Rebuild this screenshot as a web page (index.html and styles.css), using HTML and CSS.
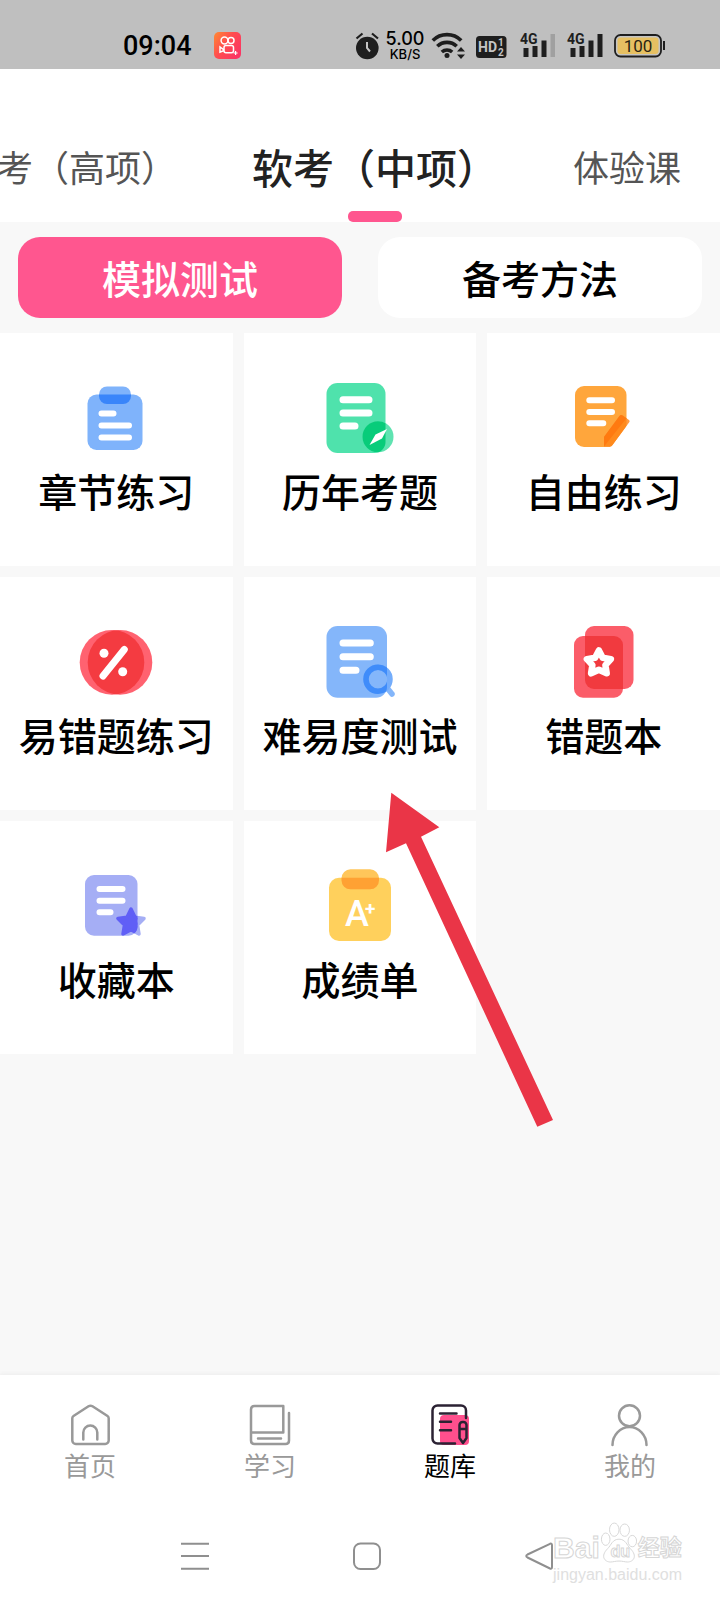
FILE: index.html
```html
<!DOCTYPE html>
<html lang="zh-CN">
<head>
<meta charset="utf-8">
<meta name="viewport" content="width=device-width, initial-scale=1">
<title>题库</title>
<link rel="stylesheet" href="styles.css">
</head>
<body>
<header class="status">
  <time class="clock">09:04</time>
  <svg class="app-badge" width="28" height="28" viewBox="0 0 28 28" aria-hidden="true">
    <defs><linearGradient id="badge" x1="0" y1="0" x2="1" y2="0.7"><stop offset="0" stop-color="#ff8a32"/><stop offset=".5" stop-color="#ff4c50"/><stop offset="1" stop-color="#fb3663"/></linearGradient></defs>
    <rect width="27" height="27" rx="5" fill="url(#badge)"/>
    <g fill="none" stroke="#fff" stroke-width="1.5"><circle cx="10.500" cy="8.500" r="3.400"/><circle cx="17" cy="8.500" r="3"/><rect x="10" y="13.500" width="9.500" height="7.300" rx="2"/><path d="M10 17.800 6 15v5.200l4-1.700"/></g>
    <path d="M21.600 19v4M19.600 21h4" stroke="#fff" stroke-width="1.2"/>
  </svg>
  <div class="indicators">
    <svg width="28" height="40" viewBox="0 0 28 40" aria-hidden="true">
      <circle cx="13.3" cy="22" r="11.3" fill="#1e1e1e"/><path d="m2.5 12.500 6-5M24 12.500l-6-5" stroke="#1e1e1e" stroke-width="2.200"/><path d="M13 16v6l3 3.500" fill="none" stroke="#c4c4c4" stroke-width="2"/>
    </svg>
    <span class="speed"><span>5.00</span><small>KB/S</small></span>
    <svg width="42" height="40" viewBox="0 0 42 40" aria-hidden="true">
      <g fill="none" stroke="#1e1e1e" stroke-width="3.600"><path d="M4.800 14.500a20 20 0 0 1 28.400 0"/><path d="M9.300 20.300a14 14 0 0 1 19.400 0"/><path d="M13.800 26a8 8 0 0 1 10.400 0"/></g>
      <circle cx="19" cy="29.500" r="2.500" fill="#1e1e1e"/><path d="m29 25.500 4-4.500 4 4.500zM29 28.500l4 4.500 4-4.500z" fill="#1e1e1e"/>
    </svg>
    <svg class="hd" width="42" height="40" viewBox="0 0 42 40" aria-hidden="true">
      <rect x="6" y="10" width="30.500" height="22" rx="3.500" fill="#1e1e1e"/><text x="8" y="26" font-size="14">HD</text><text x="28" y="20" font-size="10">1</text><text x="28" y="30" font-size="10">2</text>
    </svg>
    <svg class="signal" width="47" height="40" viewBox="0 0 47 40" aria-hidden="true">
      <text x="8" y="18" font-size="14">4G</text><path d="M11.500 22h5v9h-5zM20.500 20h5v11h-5zM29.500 14.500h5V31h-5z"/><path d="M38.500 8h4.500v23h-4.500z" fill="#a0a0a0"/>
    </svg>
    <svg class="signal" width="47" height="40" viewBox="0 0 47 40" aria-hidden="true">
      <text x="8" y="18" font-size="14">4G</text><path d="M11.500 22h5v9h-5zM20.500 20h5v11h-5zM29.500 14.500h5V31h-5zM38.500 8h5v23h-5z"/>
    </svg>
    <svg class="battery" width="64" height="40" viewBox="0 0 64 40" aria-hidden="true">
      <rect x="9" y="9" width="46" height="21.500" rx="5.500" fill="#c4c4c4" stroke="#1e1e1e" stroke-width="1.800"/><rect x="11.500" y="11.500" width="41" height="16.500" rx="3" fill="#e6c062"/><path d="M58 15v9" stroke="#1e1e1e" stroke-width="2"/><text x="32" y="26" font-size="17" text-anchor="middle">100</text>
    </svg>
  </div>
</header>

<nav class="courses" aria-label="课程">
  <a class="course" href="#">软考（高项）</a>
  <a class="course current" href="#" aria-current="page">软考（中项）</a>
  <a class="course" href="#">体验课</a>
</nav>

<main class="content">
  <div class="modes">
    <button class="mode selected" type="button">模拟测试</button>
    <button class="mode" type="button">备考方法</button>
  </div>

  <div class="grid">
    <a class="card" href="#">
      <svg class="icon" viewBox="0 0 80 80" aria-hidden="true">
        <rect x="11.500" y="17.500" width="55" height="55.500" rx="9" fill="#7fb3fb"/><rect x="23" y="9.500" width="32" height="17.500" rx="8" fill="#7fb3fb"/><path d="M23 17.500h32v1.500a8 8 0 0 1-8 8h-16a8 8 0 0 1-8-8z" fill="#3985fa"/>
        <path d="M25.500 36.500h12M25.500 48.500h27.500M25.500 60.500h27.500" class="lines soft"/>
      </svg>
      <span>章节练习</span>
    </a>
    <a class="card" href="#">
      <svg class="icon" viewBox="0 0 80 80" aria-hidden="true">
        <clipPath id="c2"><rect x="6.500" y="6" width="59" height="70" rx="11"/></clipPath>
        <rect x="6.500" y="6" width="59" height="70" rx="11" fill="#4fe2ac"/><circle cx="58" cy="59.700" r="15.500" fill="#5fe3b1"/><circle cx="58" cy="59.700" r="15.500" fill="#08cc7a" clip-path="url(#c2)"/>
        <path d="M23 22.700h26M23 36h26M23 49h12" class="lines"/><path d="M67 52 55.500 57.500 49.500 68l12.500-6.500z" fill="#fff"/>
      </svg>
      <span>历年考题</span>
    </a>
    <a class="card" href="#">
      <svg class="icon" viewBox="0 0 80 80" aria-hidden="true">
        <clipPath id="c3"><rect x="11" y="9" width="51.500" height="61" rx="9"/></clipPath>
        <path d="M20 9H53.500a9 9 0 0 1 9 9v27L46 70H20a9 9 0 0 1-9-9V18a9 9 0 0 1 9-9z" fill="#ffa63c"/>
        <path d="M58.500 38.500 65 43a1.500 1.500 0 0 1 .4 2L48.500 68q-1 1.500-3 1.500H40V60L55.500 39q1.500-1.500 3-.5z" fill="#ff9d45"/>
        <path d="M58.500 38.500 65 43a1.500 1.500 0 0 1 .4 2L48.500 68q-1 1.500-3 1.500H40V60L55.500 39q1.500-1.500 3-.5z" fill="#ff8a1c" clip-path="url(#c3)"/>
        <path d="M55.500 39 40 60v9.500L62.500 41.300l-4-2.800q-1.500-1-3 .5z" fill="#ff7a10"/>
        <path d="M25.300 23.200h22.700M25.300 35h22.700M25.300 46.300h14" class="lines soft"/>
      </svg>
      <span>自由练习</span>
    </a>
    <a class="card" href="#">
      <svg class="icon" viewBox="0 0 80 80" aria-hidden="true">
        <clipPath id="c4"><circle cx="36" cy="41.400" r="32.300"/></clipPath>
        <circle cx="36" cy="41.400" r="32.300" fill="#ff6270"/><circle cx="44" cy="41.400" r="32.300" fill="#ff6270"/><circle cx="44" cy="41.400" r="32.300" fill="#f43b41" clip-path="url(#c4)"/>
        <circle cx="28" cy="32.300" r="4.500" fill="#fff"/><circle cx="46.700" cy="50.700" r="4.500" fill="#fff"/><path d="M48.300 28.500 27 55" class="lines"/>
      </svg>
      <span>易错题练习</span>
    </a>
    <a class="card" href="#">
      <svg class="icon" viewBox="0 0 80 80" aria-hidden="true">
        <clipPath id="c5"><rect x="6.500" y="5" width="60.500" height="71.700" rx="11"/></clipPath>
        <rect x="6.500" y="5" width="60.500" height="71.700" rx="11" fill="#84b6fa"/><path d="m68 68 4 5" stroke="#84b6fa" stroke-width="5.500" stroke-linecap="round"/>
        <circle cx="58" cy="58.300" r="12" fill="#84b6fa" stroke="#74adfb" stroke-width="5.500"/><circle cx="58" cy="58.300" r="12" fill="none" stroke="#3f8cfa" stroke-width="5.500" clip-path="url(#c5)"/>
        <path d="M23 22h27.300M23 35.700h27.300M23 49.300h13" class="lines"/>
      </svg>
      <span>难易度测试</span>
    </a>
    <a class="card" href="#">
      <svg class="icon" viewBox="0 0 80 80" aria-hidden="true">
        <rect x="21" y="5" width="48.500" height="63" rx="9" fill="#fb5d69"/><rect x="10" y="15" width="49" height="61.700" rx="9" fill="#fb5d69"/><path d="M21 15h29a9 9 0 0 1 9 9v44H30a9 9 0 0 1-9-9z" fill="#f13a3f"/>
        <path d="m34.900 29.500 3.800 7.300 8.200 1.300-5.500 6 1.300 8.200-7.800-3.500-7.800 3.500 1.300-8.200-5.500-6 8.200-1.300z" fill="none" stroke="#fff" stroke-width="6.500" stroke-linejoin="round"/>
      </svg>
      <span>错题本</span>
    </a>
    <a class="card" href="#">
      <svg class="icon" viewBox="0 0 80 80" aria-hidden="true">
        <clipPath id="c7"><rect x="9" y="10" width="52.500" height="60.700" rx="9"/></clipPath>
        <rect x="9" y="10" width="52.500" height="60.700" rx="9" fill="#a5aef5"/>
        <path d="m55 44 4 8.300 9 1.300-6.500 6.400 1.500 9-8-4.200-8 4.200 1.500-9-6.500-6.400 9-1.300z" fill="#a5aef5" stroke="#a5aef5" stroke-width="3.500" stroke-linejoin="round"/>
        <path d="m55 44 4 8.300 9 1.300-6.500 6.400 1.500 9-8-4.200-8 4.200 1.500-9-6.500-6.400 9-1.300z" fill="#605ff6" stroke="#605ff6" stroke-width="3.500" stroke-linejoin="round" clip-path="url(#c7)"/>
        <path d="M23.500 24h23M23.500 35.700h23M23.500 47.300h11" class="lines soft"/>
      </svg>
      <span>收藏本</span>
    </a>
    <a class="card" href="#">
      <svg class="icon" viewBox="0 0 80 80" aria-hidden="true">
        <rect x="9" y="12.700" width="62" height="63.300" rx="10" fill="#ffd05c"/><rect x="21.500" y="4.300" width="37.500" height="20" rx="9" fill="#ffc65a"/><path d="M21.500 12.700H59v2.600a9 9 0 0 1-9 9H30.500a9 9 0 0 1-9-9z" fill="#ffa133"/>
        <text x="25" y="61" class="grade" font-size="36">A</text><text x="45" y="50" class="grade plus" font-size="19">+</text>
      </svg>
      <span>成绩单</span>
    </a>
    <svg class="pointer" width="168" height="336" viewBox="0 0 168 336" aria-hidden="true"><path d="M5.300.7 53.300 35.300 35 44.700 167 328l-15.700 6.700L20 51.300 0 60.300z" fill="#ea3547"/></svg>
  </div>
</main>

<footer class="bottom">
  <nav class="tabs" aria-label="主导航">
    <a class="tab" href="#">
      <svg viewBox="0 0 44 44" aria-hidden="true"><path d="M20.500 3.300 5.500 13q-1.200.8-1.200 2.300V37.500a3.500 3.500 0 0 0 3.500 3.500h29.400a3.500 3.500 0 0 0 3.500-3.500V15.300q0-1.500-1.200-2.300L24.500 3.300q-2-1.300-4 0zM15.300 36.500V29.500a7 7 0 0 1 14 0v7"/></svg>
      首页
    </a>
    <a class="tab" href="#">
      <svg viewBox="0 0 44 44" aria-hidden="true"><path d="M3 29.500V6.500Q3 3 6.500 3h28.800v26.500H3v8Q3 41 6.500 41h31q3.500 0 3.500-3.500V10M10 35.500h23"/></svg>
      学习
    </a>
    <a class="tab active" href="#" aria-current="page">
      <svg viewBox="0 0 44 44" aria-hidden="true"><rect x="12" y="12" width="29" height="30" rx="4" fill="#ff4f8d" stroke="none"/><path d="M27 40.500H9.500a5 5 0 0 1-5-5V7.500a5 5 0 0 1 5-5H33a5 5 0 0 1 5 5V15"/><path d="M12 10.500h16.500M12 18.800h11M12 27.300h11M31.500 26h7M31.500 35v-13a3 3 0 0 1 3-3h1a3 3 0 0 1 3 3v13L35 40z"/></svg>
      题库
    </a>
    <a class="tab" href="#">
      <svg viewBox="0 0 44 44" aria-hidden="true"><circle cx="21.500" cy="12.800" r="10.500"/><path d="M4.500 42a17 18 0 0 1 34 0"/></svg>
      我的
    </a>
  </nav>
  <div class="system">
    <button type="button" aria-label="最近任务"><svg viewBox="0 0 30 30"><path d="M1 2.700h28M1 15h28M1 27.700h28"/></svg></button>
    <button type="button" aria-label="主屏幕"><svg viewBox="0 0 30 30"><rect x="2" y="2.500" width="26" height="25.500" rx="6.500"/></svg></button>
    <button type="button" aria-label="返回"><svg viewBox="0 0 30 30"><path d="M26 2.800 3.500 13.500q-2.500 1.500 0 3L26 27.500q2 .8 2-1.500V4.300q0-2.300-2-1.500z"/></svg></button>
  </div>
  <div class="watermark">
    <div class="brand">
      <span>Bai</span>
      <svg width="38" height="46" viewBox="0 0 40 46" aria-hidden="true"><ellipse cx="6" cy="19" rx="4.500" ry="6.500"/><ellipse cx="15" cy="9" rx="5" ry="7"/><ellipse cx="26" cy="9.500" rx="5" ry="6.500"/><ellipse cx="34" cy="21" rx="4.500" ry="6"/><path d="M20 19c-7 0-8 6-12 10-8 8-3 14 3 14 3 0 5-1 9-1s6 1 9 1c6 0 11-6 3-14-4-4-5-10-12-10z"/><text x="11" y="38">du</text></svg>
      <span class="cn">经验</span>
    </div>
    <div class="site">jingyan.baidu.com</div>
  </div>
</footer>
</body>
</html>
```

FILE: styles.css
```css
* { box-sizing: border-box; }

body {
  margin: 0;
  min-height: 100vh;
  display: flex;
  flex-direction: column;
  overflow-x: hidden;
  background: #f8f8f8;
  color: #000;
  font-family: "Noto Sans CJK SC", sans-serif;
}

a { color: inherit; text-decoration: none; }

button {
  border: 0;
  padding: 0;
  background: none;
  color: inherit;
  font: inherit;
}

/* Status bar */
.status {
  display: flex;
  align-items: center;
  height: 69px;
  padding: 23px 50px 0 123px;
  background: #bfbfbf;
  font-family: Roboto, sans-serif;
}

.clock { font-size: 27px; font-weight: 500; line-height: 32px; }
.app-badge { margin-left: 22px; }
.indicators { display: flex; align-items: center; margin-left: auto; }

.speed {
  display: flex;
  flex-direction: column;
  width: 46px;
  text-align: center;
  font-family: Inter, sans-serif;
  font-weight: 500;
  font-size: 18px;
  line-height: 16px;
}

.speed small { font-size: 13px; line-height: 14px; }
.hd text { fill: #c4c4c4; font-weight: 700; }
.signal { fill: #1e1e1e; font-weight: 700; }
.battery text { fill: #2a2413; }

/* Course strip, scrolled past the start */
.courses {
  display: flex;
  gap: 75px;
  margin-left: -39px;
  padding-top: 69px;
  height: 153px;
  background: #fff;
}

.course {
  flex: none;
  color: #555;
  font-size: 36px;
  line-height: 56px;
}

.course.current {
  display: flex;
  flex-direction: column;
  align-items: center;
  gap: 17px;
  color: #222;
  font-size: 41px;
  font-weight: 500;
}

.course.current::after {
  content: "";
  width: 54px;
  height: 11px;
  border-radius: 5px;
  background: #ff568f;
}

/* Content */
.content { flex: 1; }

.modes {
  display: grid;
  grid-template-columns: 1fr 1fr;
  gap: 36px;
  padding: 15px 18px;
}

.mode {
  height: 81px;
  padding-bottom: 2px;
  border-radius: 22px;
  background: #fff;
  font-size: 39px;
  font-weight: 500;
}

.mode.selected { background: #ff568f; color: #fff; }

.grid {
  position: relative;
  display: grid;
  grid-template-columns: repeat(3, 1fr);
  gap: 11px;
}

.card {
  display: flex;
  flex-direction: column;
  align-items: center;
  height: 233px;
  padding-top: 44px;
  background: #fff;
  font-size: 39px;
  font-weight: 500;
  line-height: 66px;
  white-space: nowrap;
}

.icon { width: 80px; height: 80px; }
.lines { fill: none; stroke: #fff; stroke-width: 7px; stroke-linecap: round; }
.lines.soft { stroke-width: 6px; }
.grade { fill: #fff; font-family: Roboto, sans-serif; font-weight: 500; }
.grade.plus { font-weight: 700; }

.pointer {
  position: absolute;
  top: 459px;
  left: 386px;
}

/* Bottom navigation */
.bottom {
  position: relative;
  background: #fff;
  box-shadow: 0 -1px 4px #ececec;
}

.tabs {
  display: grid;
  grid-template-columns: repeat(4, 1fr);
  padding-top: 28px;
}

.tab {
  display: flex;
  flex-direction: column;
  align-items: center;
  color: #999;
  font-size: 26px;
  line-height: 35px;
}

.tab svg {
  width: 44px;
  height: 44px;
  fill: none;
  stroke: #999;
  stroke-width: 2.5px;
  stroke-linecap: round;
  stroke-linejoin: round;
}

.tab.active { color: #000; }
.tab.active svg { stroke: #2b2233; }

.system {
  display: flex;
  justify-content: center;
  gap: 142px;
  padding: 59px 0 29px 14px;
}

.system svg {
  display: block;
  width: 30px;
  height: 30px;
  fill: none;
  stroke: #8f8f8f;
  stroke-width: 2px;
}

/* Watermark laid over the system bar */
.watermark {
  position: absolute;
  right: 38px;
  bottom: 16px;
  color: #fff;
  font-family: "Liberation Sans", "Noto Sans CJK SC", sans-serif;
  -webkit-text-stroke: 1px #d6d6d6;
}

.brand {
  display: flex;
  align-items: flex-end;
  height: 46px;
  font-size: 30px;
  font-weight: 700;
  line-height: 36px;
}

.brand svg { fill: #fff; stroke: #d6d6d6; }
.brand text { font-size: 17px; }
.brand .cn { font-size: 22px; }
.site { color: #e0e0e0; font-size: 16px; line-height: 18px; -webkit-text-stroke: 0; }
```
